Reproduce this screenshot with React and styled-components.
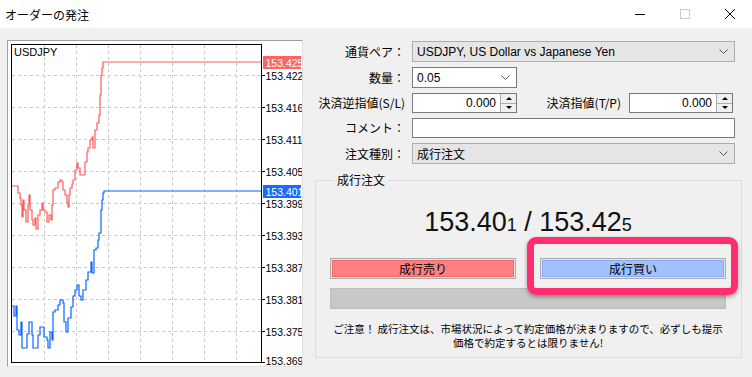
import styled, { createGlobalStyle } from 'styled-components';

const GlobalStyle = createGlobalStyle`
  html, body {
    margin: 0;
    padding: 0;
    background: #f0f0f0;
    font-family: "Liberation Sans", "Noto Sans CJK JP", sans-serif;
    font-size: 12px;
    color: #000;
  }
`;

const FONT = '"Liberation Sans", "Noto Sans CJK JP", sans-serif';

const red = [
  [12, 186], [17, 186], [18, 193], [20, 198], [21, 205], [22, 217], [23, 200], [24, 210],
  [26, 222], [28, 205], [29, 195], [30, 210], [32, 220], [33, 225], [35, 218], [36, 229],
  [38, 215], [40, 210], [42, 203], [43, 210], [45, 212], [47, 222], [49, 215], [51, 220],
  [52, 205], [53, 190], [55, 188], [58, 182], [60, 180], [62, 182], [63, 190], [65, 195],
  [67, 203], [68, 207], [69, 195], [70, 188], [72, 184], [73, 180], [75, 170], [77, 163],
  [78, 168], [80, 175], [83, 175], [85, 162], [87, 152], [88, 148], [90, 140], [92, 137],
  [93, 148], [95, 130], [97, 123], [99, 115], [100, 95], [101, 75], [102, 68], [103, 62],
  [262, 62],
];

const blue = [
  [12, 306], [14, 316], [16, 306], [17, 330], [19, 335], [21, 322], [22, 348], [24, 348],
  [27, 334], [29, 322], [32, 335], [33, 348], [36, 348], [38, 335], [40, 327], [43, 327],
  [44, 337], [47, 340], [48, 348], [50, 332], [52, 340], [53, 312], [55, 310], [58, 305],
  [60, 300], [63, 303], [64, 322], [66, 332], [68, 318], [71, 307], [73, 296], [75, 290],
  [77, 285], [79, 296], [81, 300], [83, 290], [86, 280], [88, 272], [91, 262], [92, 273],
  [94, 250], [96, 248], [98, 240], [99, 233], [101, 210], [102, 200], [103, 193], [104, 191],
  [262, 191],
];

const levels = ['153.422', '153.416', '153.411', '153.405', '153.399', '153.393', '153.387', '153.381', '153.375'];

const toStep = pts => {
  let d = `M${pts[0][0]} ${pts[0][1]}`;
  for (let i = 1; i < pts.length; i++) {
    d += ` H${pts[i][0]} V${pts[i][1]}`;
  }
  return d;
};

const Window = styled.div`
  width: 752px;
  height: 377px;
  display: flex;
  flex-direction: column;
  overflow: hidden;
`;

const TitleBar = styled.div`
  height: 28px;
  background: #fff;
  display: flex;
  align-items: center;
  padding-left: 5px;
  font-size: 12px;
`;

const Title = styled.span`
  flex: 1;
  font-family: "Noto Sans CJK JP", sans-serif;
`;

const Controls = styled.div`
  display: flex;
  height: 28px;
`;

const Ctrl = styled.div`
  width: 45px;
  display: flex;
  align-items: center;
  justify-content: center;
`;

const Body = styled.div`
  flex: 1;
  display: flex;
  padding: 12px 10px 0 7px;
`;

const ChartPanel = styled.div`
  width: 294px;
  height: 325px;
  background: #fff;
  border-left: 1px solid #a0a0a0;
  border-top: 1px solid #a0a0a0;
  border-right: 1px solid #e3e3e3;
  border-bottom: 1px solid #e3e3e3;
`;

const Right = styled.div`
  flex: 1;
  margin-left: 12px;
  padding-top: 1px;
  display: flex;
  flex-direction: column;
`;

const Form = styled.div`
  display: flex;
  flex-direction: column;
  gap: 5px;
  padding-right: 7px;
`;

const Row = styled.div`
  display: flex;
  align-items: center;
  height: ${p => p.h}px;
`;

const Label = styled.div`
  width: ${p => p.w || 90}px;
  text-align: right;
  margin-right: ${p => p.mr ?? 7}px;
  font-family: "Noto Sans CJK JP", sans-serif;
  font-size: 12px;
  line-height: 14px;
  white-space: nowrap;
`;

const Field = styled.div`
  box-sizing: border-box;
  height: 100%;
  width: ${p => (p.w ? `${p.w}px` : 'auto')};
  flex: ${p => (p.w ? 'none' : 1)};
  background: ${p => (p.gray ? '#e5e5e5' : '#fff')};
  border: 1px solid ${p => (p.gray ? '#adadad' : '#7a7a7a')};
  display: flex;
  align-items: center;
  padding-left: ${p => (p.right ? 0 : 4)}px;
  font-family: ${FONT};
  font-size: 12px;
`;

const FieldText = styled.span`
  flex: 1;
  text-align: ${p => (p.right ? 'right' : 'left')};
  padding-right: ${p => (p.right ? 4 : 0)}px;
  font-family: ${p => (p.jp ? '"Noto Sans CJK JP", sans-serif' : FONT)};
`;

const Chevron = styled.svg`
  width: 9px;
  height: 5px;
  margin-right: 6px;
`;

const Spin = styled.div`
  width: 15px;
  height: 100%;
  border-left: 1px solid #adadad;
  display: flex;
  flex-direction: column;
  background: #f0f0f0;
`;

const SpinHalf = styled.div`
  flex: 1;
  display: flex;
  align-items: center;
  justify-content: center;
  & + & {
    border-top: 1px solid #adadad;
  }
  &::after {
    content: '';
    border-left: 3px solid transparent;
    border-right: 3px solid transparent;
    ${p => (p.up ? 'border-bottom: 3px solid #000;' : 'border-top: 3px solid #000;')}
  }
`;

const Group = styled.fieldset`
  margin: 8px 0 0 0;
  padding: 0 15px 0 14px;
  height: 186px;
  box-sizing: border-box;
  border: 1px solid #dcdcdc;
  display: flex;
  flex-direction: column;
  min-width: 0;
`;

const Legend = styled.legend`
  padding: 0 3px;
  margin-left: 4px;
  font-family: "Noto Sans CJK JP", sans-serif;
  font-size: 12px;
  line-height: 16px;
`;

const Price = styled.div`
  margin-top: 19px;
  text-align: center;
  font-family: ${FONT};
  font-size: 27px;
  line-height: 30px;
  color: #111;
`;

const Small = styled.span`
  font-size: 18px;
`;

const Buttons = styled.div`
  margin-top: 18px;
  display: flex;
  gap: 24px;
`;

const BtnWrap = styled.div`
  position: relative;
  flex: 1;
`;

const Btn = styled.div`
  height: 21px;
  box-sizing: border-box;
  border: 1px solid #acacac;
  background: ${p => p.bg};
  box-shadow: inset 0 0 0 1px #e6e6e6, inset 0 0 0 2px ${p => p.edge};
  display: flex;
  align-items: center;
  justify-content: center;
  font-family: "Noto Sans CJK JP", sans-serif;
  font-size: 12px;
`;

const Highlight = styled.div`
  position: absolute;
  left: -13px;
  right: -12px;
  top: -21px;
  bottom: -16px;
  border: 7px solid #ff2e6e;
  border-radius: 9px;
  box-shadow: 0 2px 4px rgba(0, 0, 0, 0.35);
  z-index: 2;
`;

const Bar = styled.div`
  margin-top: 9px;
  height: 21px;
  box-sizing: border-box;
  background: #c8c8c8;
  border: 1px solid #bcbcbc;
`;

const Notice = styled.div`
  margin: 13px -10px 0;
  text-align: center;
  font-family: "Noto Sans CJK JP", sans-serif;
  font-size: 10.5px;
  line-height: 14px;
  white-space: nowrap;
`;

const Chart = () => (
  <svg width="294" height="325" viewBox="8 41 294 325" style={{ display: 'block' }}>
    <g stroke="#c8c8c8" strokeDasharray="3 3" strokeWidth="1">
      {levels.map((_, i) => (
        <line key={`h${i}`} x1="12" x2="261" y1={75.5 + i * 32} y2={75.5 + i * 32} />
      ))}
      {[0, 1, 2, 3, 4, 5, 6].map(i => (
        <line key={`v${i}`} y1="45" y2="362" x1={44.5 + i * 32} x2={44.5 + i * 32} />
      ))}
    </g>
    <path d={toStep(red)} fill="none" stroke="#ff5a5a" strokeWidth="1.2" />
    <path d={toStep(blue)} fill="none" stroke="#0a64ff" strokeWidth="1.2" />
    <rect x="11.5" y="44.5" width="250" height="318" fill="none" stroke="#000" />
    <text x="14" y="56" fontFamily={FONT} fontSize="11" fill="#000">USDJPY</text>
    <g fontFamily={FONT} fontSize="10.5" fill="#000">
      {levels.map((v, i) => (
        <g key={v}>
          <line x1="262" x2="265" y1={75.5 + i * 32} y2={75.5 + i * 32} stroke="#000" />
          <text x="265.5" y={79.5 + i * 32}>{v}</text>
        </g>
      ))}
      <line x1="262" x2="265" y1="362.5" y2="362.5" stroke="#000" />
      <text x="265.5" y="365">153.369</text>
    </g>
    <rect x="263" y="56" width="38" height="13" fill="#ff6464" />
    <text x="265.5" y="66.5" fontFamily={FONT} fontSize="10.5" fill="#fff">153.425</text>
    <rect x="263" y="185" width="38" height="13" fill="#1a6aff" />
    <text x="265.5" y="195.5" fontFamily={FONT} fontSize="10.5" fill="#fff">153.401</text>
  </svg>
);

const ChevronIcon = () => (
  <Chevron viewBox="0 0 9 5">
    <polyline points="0.5,0.5 4.5,4.5 8.5,0.5" fill="none" stroke="#555" strokeWidth="1" />
  </Chevron>
);

const Spinner = () => (
  <Spin>
    <SpinHalf up />
    <SpinHalf />
  </Spin>
);

export default function App() {
  return (
    <>
      <GlobalStyle />
      <Window>
        <TitleBar>
          <Title>オーダーの発注</Title>
          <Controls>
            <Ctrl>
              <svg width="10" height="10"><line x1="0" x2="10" y1="5.5" y2="5.5" stroke="#000" /></svg>
            </Ctrl>
            <Ctrl>
              <svg width="10" height="10"><rect x="0.5" y="0.5" width="9" height="9" fill="none" stroke="#ccc" /></svg>
            </Ctrl>
            <Ctrl>
              <svg width="10" height="10">
                <line x1="0" y1="0" x2="10" y2="10" stroke="#000" />
                <line x1="10" y1="0" x2="0" y2="10" stroke="#000" />
              </svg>
            </Ctrl>
          </Controls>
        </TitleBar>
        <Body>
          <ChartPanel>
            <Chart />
          </ChartPanel>
          <Right>
            <Form>
              <Row h={21}>
                <Label>通貨ペア：</Label>
                <Field gray>
                  <FieldText>USDJPY, US Dollar vs Japanese Yen</FieldText>
                  <ChevronIcon />
                </Field>
              </Row>
              <Row h={21}>
                <Label>数量：</Label>
                <Field w={105}>
                  <FieldText>0.05</FieldText>
                  <ChevronIcon />
                </Field>
              </Row>
              <Row h={20}>
                <Label>決済逆指値(S/L)</Label>
                <Field w={105} right>
                  <FieldText right>0.000</FieldText>
                  <Spinner />
                </Field>
                <Label w={104} mr={8}>決済指値(T/P)</Label>
                <Field w={104} right>
                  <FieldText right>0.000</FieldText>
                  <Spinner />
                </Field>
              </Row>
              <Row h={20}>
                <Label>コメント：</Label>
                <Field />
              </Row>
              <Row h={21}>
                <Label>注文種別：</Label>
                <Field gray>
                  <FieldText jp>成行注文</FieldText>
                  <ChevronIcon />
                </Field>
              </Row>
            </Form>
            <Group>
              <Legend>成行注文</Legend>
              <Price>
                153.40<Small>1</Small> / 153.42<Small>5</Small>
              </Price>
              <Buttons>
                <BtnWrap>
                  <Btn bg="#ff8080" edge="#f06a6a">成行売り</Btn>
                </BtnWrap>
                <BtnWrap>
                  <Btn bg="#a0c0ff" edge="#8aaaf2">成行買い</Btn>
                  <Highlight />
                </BtnWrap>
              </Buttons>
              <Bar />
              <Notice>
                ご注意！ 成行注文は、市場状況によって約定価格が決まりますので、必ずしも提示
                <br />
                価格で約定するとは限りません!
              </Notice>
            </Group>
          </Right>
        </Body>
      </Window>
    </>
  );
}
